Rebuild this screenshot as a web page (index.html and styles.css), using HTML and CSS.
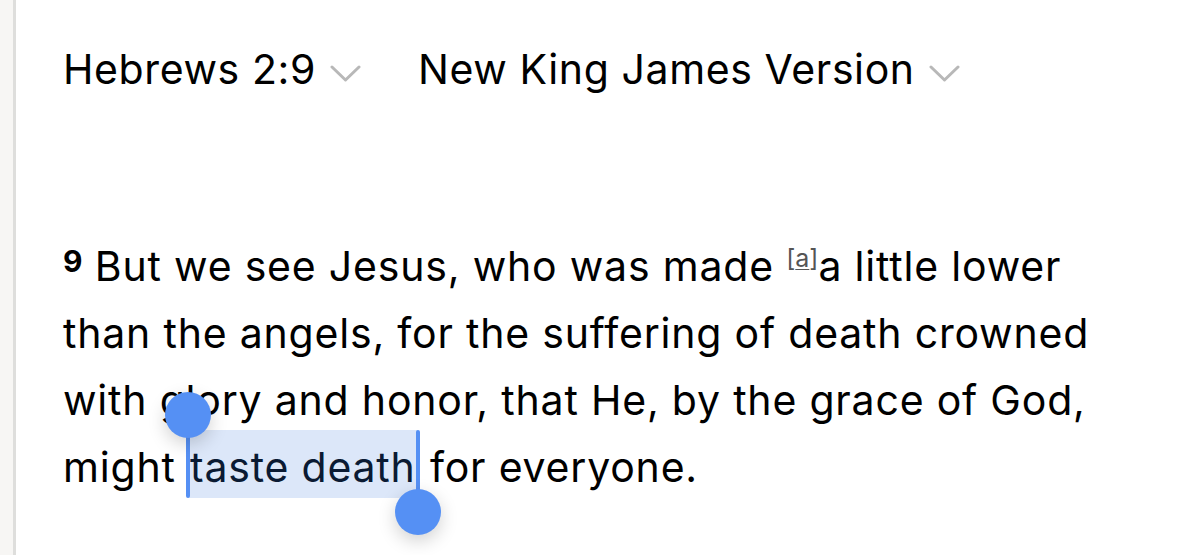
FILE: index.html
```html
<!DOCTYPE html>
<html lang="en">
<head>
<meta charset="utf-8">
<title>Hebrews 2:9</title>
<link rel="stylesheet" href="styles.css">
</head>
<body>
<div class="page">
  <div class="gutter"></div>
  <main class="reader">
    <header class="toolbar">
      <button class="picker">
        <span class="picker-label">Hebrews 2:9</span>
        <svg class="chev" width="31" height="17" viewBox="0 0 31 17"><path d="M2 2 L15.5 15 L29 2" fill="none" stroke="#b8b8b8" stroke-width="3" stroke-linecap="round" stroke-linejoin="round"/></svg>
      </button>
      <button class="picker">
        <span class="picker-label">New King James Version</span>
        <svg class="chev" width="31" height="17" viewBox="0 0 31 17"><path d="M2 2 L15.5 15 L29 2" fill="none" stroke="#b8b8b8" stroke-width="3" stroke-linecap="round" stroke-linejoin="round"/></svg>
      </button>
    </header>
    <p class="verse"><sup class="vnum">9</sup> But we see Jesus, who was made <sup class="fn">[<u>a</u>]</sup>a little lower<br>than the angels, for the suffering of death crowned<br>with glory and honor, that He, by the grace of God,<br>might <span class="sel">taste death<span class="handle handle-start"></span><span class="handle handle-end"></span></span> for everyone.</p>
  </main>
</div>
</body>
</html>
```
FILE: styles.css
```css
html, body {
  margin: 0;
  padding: 0;
  background: #ffffff;
}
body {
  font-family: Inter, "Noto Sans", sans-serif;
  color: #000;
  overflow: hidden;
}
.page {
  display: flex;
  height: 555px;
}
.gutter {
  width: 13px;
  background: #f7f6f4;
  border-right: 3px solid #dededc;
  flex: none;
}
.reader {
  flex: 1;
  padding-left: 47px;
}
.toolbar {
  display: flex;
  align-items: center;
  gap: 57px;
  padding-top: 42px;
  height: 54px;
}
.picker {
  display: flex;
  align-items: center;
  gap: 14px;
  background: none;
  border: 0;
  padding: 0;
  font: inherit;
  color: inherit;
}
.picker-label {
  font-size: 41px;
  line-height: 54px;
  letter-spacing: 0.6px;
}
.chev {
  margin-top: 8px;
}
.verse {
  margin: 0;
  margin-top: 137px;
  font-size: 41px;
  line-height: 67px;
  letter-spacing: 0.8px;
}
.vnum {
  font-size: 30px;
  font-weight: 700;
  vertical-align: 9px;
  line-height: 0;
  letter-spacing: 0;
}
.fn {
  font-size: 25px;
  color: #555;
  vertical-align: 14px;
  line-height: 0;
  letter-spacing: 0;
}
.fn u {
  text-decoration-thickness: 1px;
  text-underline-offset: 2px;
}
.sel {
  position: relative;
  background: #dce7f9;
  padding: 12px 2px 6px;
  color: #0a1a33;
}
.handle {
  position: absolute;
  width: 4px;
  background: #5590f4;
  border-radius: 2px;
}
.handle::after {
  content: "";
  position: absolute;
  width: 46px;
  height: 46px;
  border-radius: 50%;
  background: #5590f4;
  left: -21px;
  box-shadow: 0 6px 18px rgba(0, 0, 0, 0.18);
}
.handle-start {
  left: -2px;
  top: -15px;
  bottom: 0;
}
.handle-start::after {
  top: -23px;
}
.handle-end {
  right: -2px;
  top: 0;
  bottom: -14px;
}
.handle-end::after {
  bottom: -23px;
}
```
